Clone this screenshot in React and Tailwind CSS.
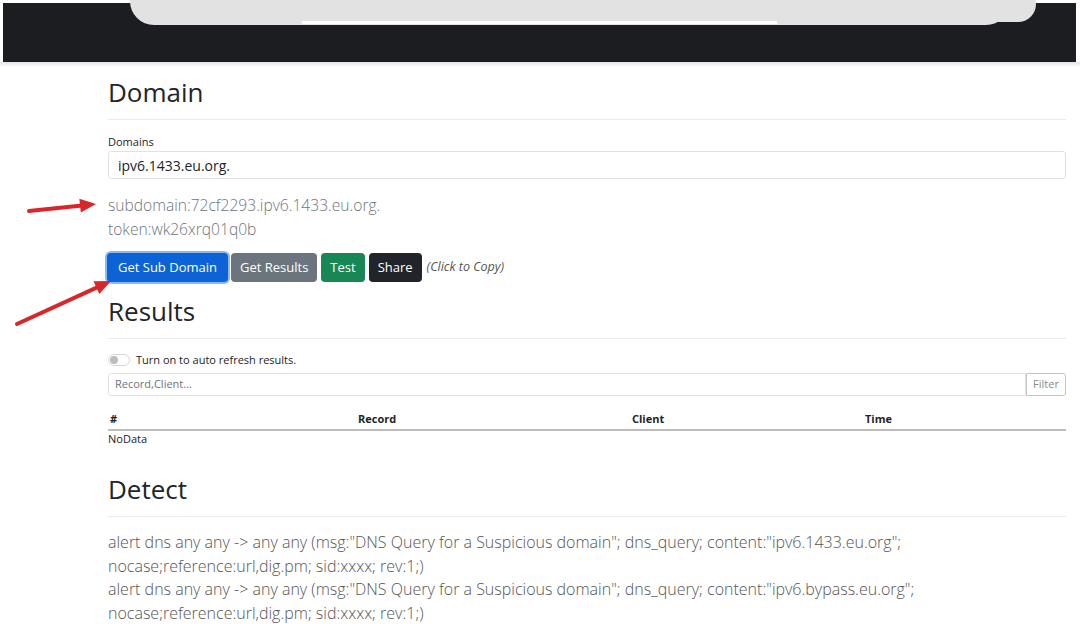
import React from 'react';

const Arrow = ({ x1, y1, x2, y2 }) => {
  // red annotation arrow, shaft + filled head
  const dx = x2 - x1;
  const dy = y2 - y1;
  const len = Math.sqrt(dx * dx + dy * dy);
  const ux = dx / len;
  const uy = dy / len;
  const hx = x2 - ux * 16;
  const hy = y2 - uy * 16;
  const px = -uy * 7;
  const py = ux * 7;
  return (
    <g>
      <line x1={x1} y1={y1} x2={hx + ux * 2} y2={hy + uy * 2} stroke="#d9262b" strokeWidth="4" strokeLinecap="round" />
      <polygon points={`${x2},${y2} ${hx + px},${hy + py} ${hx - px},${hy - py}`} fill="#d9262b" />
    </g>
  );
};

const Heading = ({ children }) => (
  <div>
    <h2 className="text-[26px] leading-[34px] text-[#212529] font-normal">{children}</h2>
    <div className="mt-[10px] h-px bg-[#e9ecef]" />
  </div>
);

const rules = [
  ['alert dns any any -> any any (msg:"DNS Query for a Suspicious domain"; dns_query; content:"ipv6.1433.eu.org";', 'nocase;reference:url,dig.pm; sid:xxxx; rev:1;)'],
  ['alert dns any any -> any any (msg:"DNS Query for a Suspicious domain"; dns_query; content:"ipv6.bypass.eu.org";', 'nocase;reference:url,dig.pm; sid:xxxx; rev:1;)'],
];

export default function App() {
  return (
    <div className="relative min-h-screen bg-white font-['Open_Sans',sans-serif] text-[#212529] overflow-hidden">
      {/* top bar (redacted) */}
      <div className="ml-[3px] mr-[4px] mt-[3px] h-[59px] bg-[#1b1d21]" />
      <div className="h-[5px] bg-gradient-to-b from-[#e4e4e4] to-white" />
      <div className="absolute top-0 left-[130px] w-[880px] h-[25px] bg-[#e2e2e2] rounded-b-[24px]" />
      <div className="absolute top-[-14px] left-[980px] w-[56px] h-[36px] bg-[#e2e2e2] rounded-full" />
      <div className="absolute top-[21px] left-[302px] w-[475px] h-[3px] bg-white" />

      <main className="ml-[108px] w-[958px] pt-[8px]">
        <Heading>Domain</Heading>

        <label className="block mt-[13px] text-[11px] leading-[18px] text-[#212529]">Domains</label>
        <div className="h-[28px] border border-[#dee2e6] rounded-[3px] flex items-center pl-[9px] text-[14px]">
          ipv6.1433.eu.org.
        </div>

        <div className="mt-[14px] text-[15.6px] leading-[24px] font-light text-[#6c757d]">
          <div>subdomain:72cf2293.ipv6.1433.eu.org.</div>
          <div>token:wk26xrq01q0b</div>
        </div>

        <div className="mt-[12px] flex items-center gap-[4px] text-[13px]">
          <button className="h-[29px] px-[11px] bg-[#0d62d6] text-white rounded-[4px] ring-[2px] ring-[#8db8f6] -ml-px">Get Sub Domain</button>
          <button className="h-[29px] px-[9px] -ml-px bg-[#6c757d] text-white rounded-[4px]">Get Results</button>
          <button className="h-[29px] px-[9px] bg-[#198754] text-white rounded-[4px]">Test</button>
          <button className="h-[29px] px-[9px] bg-[#212529] text-white rounded-[4px]">Share</button>
          <span className="ml-px text-[12.5px] italic text-[#555]">(Click to Copy)</span>
        </div>

        <div className="mt-[12px]">
          <Heading>Results</Heading>
        </div>

        <div className="mt-[12px] flex items-center gap-[6px] h-[18px] text-[11px]">
          <span className="relative w-[22px] h-[12px] rounded-full border border-[#d6d6d6] bg-white">
            <span className="absolute left-[1px] top-[1px] w-[8px] h-[8px] rounded-full bg-[#bdbdbd]" />
          </span>
          <span>Turn on to auto refresh results.</span>
        </div>

        <div className="mt-[4px] flex h-[23px]">
          <div className="flex-1 border border-[#dee2e6] rounded-l-[3px] flex items-center pl-[6px] text-[11px] text-[#6c757d]">
            Record,Client...
          </div>
          <button className="w-[40px] border border-[#c4c4c4] rounded-r-[3px] text-[11px] text-[#8a8a8a]">Filter</button>
        </div>

        <div className="mt-[13px] grid grid-cols-[248px_274px_233px_1fr] text-[11px] font-bold h-[22px] items-center border-b-2 border-[#bdbdbd]">
          <span className="pl-[2px]">#</span>
          <span className="pl-[2px]">Record</span>
          <span className="pl-[2px]">Client</span>
          <span className="pl-[2px]">Time</span>
        </div>
        <div className="text-[11px] leading-[16px]">NoData</div>

        <div className="mt-[25px]">
          <Heading>Detect</Heading>
        </div>

        <div className="mt-[14px] text-[16px] leading-[23.6px] font-light text-[#555]">
          {rules.map((r, i) => (
            <div key={i}>
              <div className="whitespace-nowrap">{r[0]}</div>
              <div className="whitespace-nowrap">{r[1]}</div>
            </div>
          ))}
        </div>
      </main>

      <svg className="absolute inset-0 pointer-events-none" width="1080" height="624">
        <Arrow x1={29} y1={211} x2={96} y2={204} />
        <Arrow x1={17} y1={324} x2={111} y2={281} />
      </svg>
    </div>
  );
}
